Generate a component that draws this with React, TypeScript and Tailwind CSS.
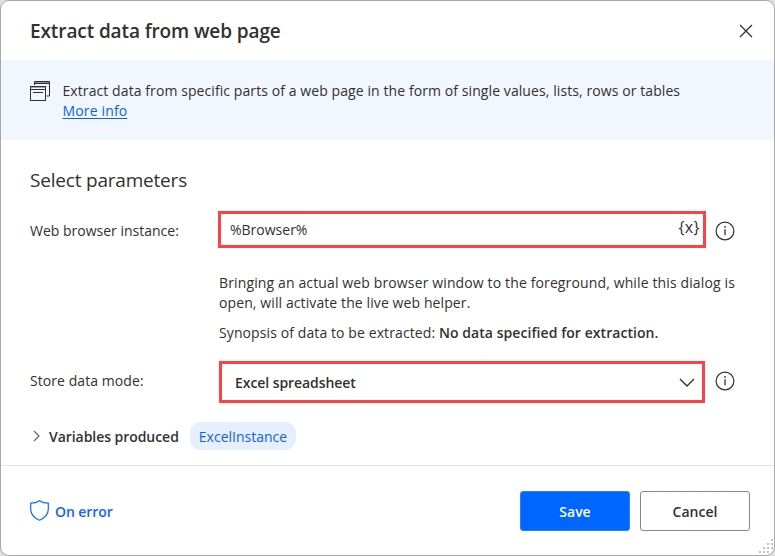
import React from "react";

function WindowsIcon() {
  return (
    <svg width="21" height="21" viewBox="0 0 21 21" fill="none" stroke="#323130" strokeWidth="1" className="shrink-0">
      <path d="M4.500 4V.5h15v14.500h-3" />
      <path d="M4.500 1.500h15" strokeOpacity=".5" />
      <path d="M4.500 2.500h15" />
      <rect x=".5" y="5.500" width="15" height="14" />
      <path d="M.5 6.500h15" strokeOpacity=".4" />
      <path d="M.5 8.500h15M3 11.500h10" />
    </svg>
  );
}

function InfoIcon() {
  return (
    <svg width="20" height="20" viewBox="0 0 20 20" fill="none" stroke="#323130" className="shrink-0">
      <circle cx="10" cy="10" r="8.9" strokeWidth="1.2" />
      <path d="M10 8.200v6" strokeWidth="1.3" />
      <circle cx="10" cy="5.900" r=".9" fill="#323130" stroke="none" />
    </svg>
  );
}

export default function App() {
  return (
    <div className="h-[556px] w-[775px] bg-[#dedede] font-['Open_Sans','Noto_Sans',sans-serif] text-[14px] leading-5 text-[#323130]">
      <div className="relative flex h-full flex-col overflow-hidden whitespace-nowrap rounded-[9px] border border-[#a8a8a8] bg-white">
        <header className="flex h-[59px] shrink-0 items-center justify-between pr-[21.500px] pl-[29px]">
          <h1 className="pt-px text-[19px] font-semibold tracking-[-0.1px]">Extract data from web page</h1>
          <svg width="14" height="14" viewBox="0 0 14 14" stroke="#323130" strokeWidth="1.3">
            <path d="M1 1l12 12M13 1L1 13" />
          </svg>
        </header>

        <section className="flex h-20 shrink-0 gap-[11.500px] bg-[#f1f6ff] pt-[21px] pl-[29px]">
          <WindowsIcon />
          <div>
            <p className="tracking-[0.085px]">Extract data from specific parts of a web page in the form of single values, lists, rows or tables</p>
            <a className="tracking-[0.15px] text-[#0f62e6] underline underline-offset-2">More info</a>
          </div>
        </section>

        <main className="flex h-[325px] shrink-0 flex-col pl-[29px]">
          <h2 className="mt-[28px] text-[19px] leading-6 tracking-[-0.2px]">Select parameters</h2>

          <div className="mt-[19px] flex h-[37px] items-center">
            <span className="w-[188px] pt-[2px]">Web browser instance:</span>
            <div className="flex h-[37px] w-[488px] items-center justify-between border-3 border-[#fc4343] pr-[3px] pl-[9px]">
              <span>%Browser%</span>
              <span className="pb-[5px] text-[16px] tracking-[0.4px]">{"{x}"}</span>
            </div>
            <span className="ml-[8.500px] pt-[3px]"><InfoIcon /></span>
          </div>

          <div className="mt-[25px] pl-[189px] tracking-[0.1px]">
            <p className="tracking-[0.13px]">Bringing an actual web browser window to the foreground, while this dialog is</p>
            <p>open, will activate the live web helper.</p>
            <p className="mt-[10px]">
              Synopsis of data to be extracted: <b className="font-semibold tracking-[0.06px]">No data specified for extraction.</b>
            </p>
          </div>

          <div className="mt-[18px] flex h-[42px] items-center">
            <span className="w-[189px] pb-[2px] tracking-[0.07px]">Store data mode:</span>
            <div className="flex h-[42px] w-[486px] items-center justify-between border-3 border-[#fc4343] pr-[7.500px] pl-[13px]">
              <span className="pt-[2px] font-semibold tracking-[-0.07px]">Excel spreadsheet</span>
              <svg width="16" height="10" viewBox="0 0 16 10" fill="none" stroke="#323130" strokeWidth="1.4" className="mt-[2px]">
                <path d="M1 1l7 7 7-7" />
              </svg>
            </div>
            <span className="ml-[9.500px] pb-[2px]"><InfoIcon /></span>
          </div>

          <div className="mt-[19px] flex h-[28px] items-center">
            <svg width="8" height="12" viewBox="0 0 8 12" fill="none" stroke="#605e5c" strokeWidth="1.1" className="ml-[3px]">
              <path d="M1 1l5 5-5 5" />
            </svg>
            <span className="ml-[8px] w-[141px] pt-[2px] font-semibold tracking-[-0.05px]">Variables produced</span>
            <span className="flex h-[28px] w-[106px] items-center justify-center rounded-[11px] bg-[#e6effe] pt-[2px] text-[#0f62e6]">ExcelInstance</span>
          </div>
        </main>

        <footer className="flex h-[90px] items-center border-t border-[#e5e5e5] pr-[24px] pl-[29px]">
          <svg width="19" height="21" viewBox="0 0 19 21" fill="none" stroke="#0f6cff" strokeWidth="1.2">
            <path d="M9.500.7C7.200 2.400 4.500 3.100.7 3.200v6.100c0 5.200 3.500 8.600 8.800 11 5.300-2.400 8.800-5.800 8.800-11V3.200C14.500 3.100 11.800 2.400 9.500.7Z" />
          </svg>
          <span className="ml-[6px] pt-[2px] font-semibold tracking-[-0.08px] text-[#0f62fe]">On error</span>
          <button className="ml-auto h-10 w-[110px] rounded-[3px] border border-[#2a80ff] bg-[#0066ff] pt-[2px] font-semibold text-white">Save</button>
          <button className="ml-[10px] h-10 w-[110px] rounded-[3px] border border-[#8a8886] pt-[2px] font-semibold">Cancel</button>
        </footer>

        <svg width="16" height="16" viewBox="0 0 16 16" fill="#b9c2d6" className="absolute right-0 bottom-0">
          <path d="M13 0h2v2h-2zM9 4h2v2H9zM13 4h2v2h-2zM5 8h2v2H5zM9 8h2v2H9zM13 8h2v2h-2zM1 12h2v2H1zM5 12h2v2H5zM9 12h2v2H9z" />
        </svg>
      </div>
    </div>
  );
}
